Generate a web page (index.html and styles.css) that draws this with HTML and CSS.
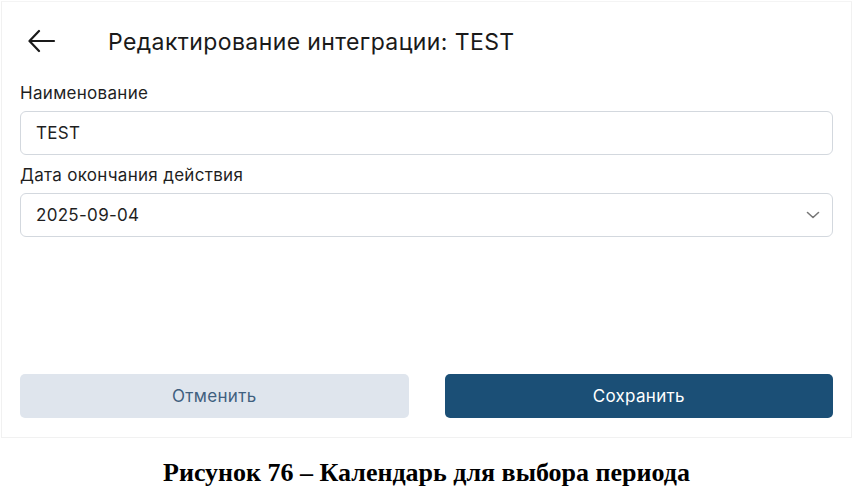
FILE: index.html
```html
<!DOCTYPE html>
<html lang="ru">
<head>
<meta charset="utf-8">
<link rel="stylesheet" href="styles.css">
</head>
<body>
<div class="panel">
  <div class="header">
    <svg class="back" width="28" height="24" viewBox="0 0 28 24" fill="none" stroke="#1a1a1a" stroke-width="2.2" stroke-linecap="round" stroke-linejoin="round">
      <path d="M2 12H26"/><path d="M11 2L1.5 12L11 22"/>
    </svg>
    <div class="title">Редактирование интеграции: TEST</div>
  </div>
  <div class="form">
    <div class="field">
      <div class="label">Наименование</div>
      <div class="input">TEST</div>
    </div>
    <div class="field">
      <div class="label">Дата окончания действия</div>
      <div class="input select">2025-09-04
        <svg class="chev" width="14" height="8" viewBox="0 0 14 8" fill="none" stroke="#777" stroke-width="1.6" stroke-linecap="round" stroke-linejoin="round"><path d="M1.5 1.5L7 6.5L12.5 1.5"/></svg>
      </div>
    </div>
  </div>
  <div class="actions">
    <button class="btn cancel">Отменить</button>
    <button class="btn save">Сохранить</button>
  </div>
</div>
<div class="caption">Рисунок 76 – Календарь для выбора периода</div>
</body>
</html>
```
FILE: styles.css
```css
html, body { margin: 0; padding: 0; background: #fff; }
body { font-family: Inter, "Noto Sans", sans-serif; color: #1d1d1d; width: 853px; height: 491px; overflow: hidden; }
.panel {
  margin: 1px 1px 0 1px;
  width: 851px;
  height: 437px;
  box-sizing: border-box;
  border: 1px solid #f1f1f1;
  border-top-color: #f4f4f4;
  padding: 0 18px 19px 18px;
  display: flex;
  flex-direction: column;
}
.header { height: 80px; display: flex; align-items: center; }
.back { margin-left: 8px; margin-top: -2px; }
.title { margin-left: 52px; font-size: 23px; letter-spacing: 0.4px; color: #1a1a1a; }
.form { display: flex; flex-direction: column; gap: 9px; }
.field { display: flex; flex-direction: column; gap: 7px; }
.label { font-size: 17px; letter-spacing: 0.3px; line-height: 22px; color: #1f1f1f; }
.input {
  height: 44px; box-sizing: border-box;
  border: 1px solid #d3d8de; border-radius: 6px;
  padding: 0 12px 0 15px; display: flex; align-items: center;
  font-size: 17px; letter-spacing: 0.3px; color: #1f1f1f;
}
.select { justify-content: space-between; }
.actions { margin-top: auto; display: flex; gap: 36px; }
.btn {
  flex: 1; height: 44px; border: none; border-radius: 5px;
  font-family: Inter, "Noto Sans", sans-serif; font-size: 17px; letter-spacing: 0.3px;
}
.cancel { background: #dfe5ed; color: #3f607f; }
.save { background: #1b4f76; color: #fff; }
.caption {
  text-align: center; font-family: "Liberation Serif", serif; font-weight: bold;
  font-size: 26px; line-height: 30px; color: #000; margin-top: 20px;
}
```
